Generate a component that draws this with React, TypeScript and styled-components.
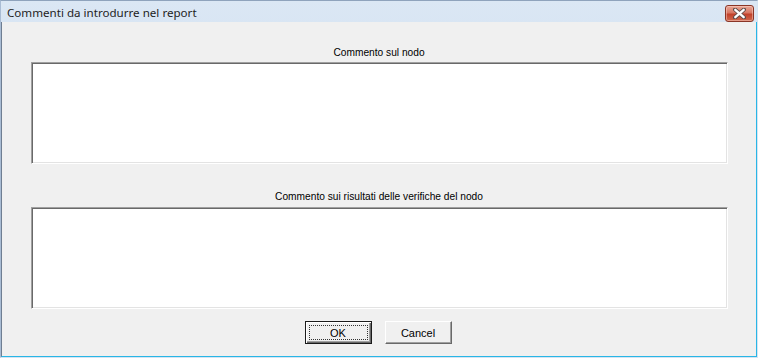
import React from 'react';
import styled, { createGlobalStyle } from 'styled-components';

const GlobalStyle = createGlobalStyle`
  html, body {
    margin: 0;
    padding: 0;
    background: #f0f0f0;
  }
  * {
    box-sizing: border-box;
  }
`;

const Frame = styled.div`
  width: 758px;
  height: 358px;
  display: flex;
  flex-direction: column;
  background: linear-gradient(#dbe7f4, #c6d9ee 60%, #b9d0e9);
  border-left: 1px solid #a9bcd4;
  border-right: 1px solid #d6e4f2;
  border-bottom: 1px solid #d6e4f2;
  border-top: 1px solid #8fa3bc;
`;

const TitleBar = styled.div`
  height: 21px;
  display: flex;
  align-items: center;
  justify-content: space-between;
  padding: 0 3px 0 6px;
`;

const Title = styled.span`
  font-family: "Noto Sans", "Open Sans", sans-serif;
  font-size: 11.6px;
  color: #1e1e1e;
  padding-top: 2px;
`;

const CloseButton = styled.div`
  width: 29px;
  height: 17px;
  margin-top: 4px;
  display: flex;
  align-items: center;
  justify-content: center;
  border: 1px solid #8a3526;
  border-radius: 3px;
  background: linear-gradient(#e9a796, #d77763 45%, #c2412a 55%, #cf6a4f);
  box-shadow: inset 0 0 0 1px rgba(255, 220, 210, 0.45);
`;

const Client = styled.div`
  flex: 1;
  display: flex;
  flex-direction: column;
  align-items: center;
  background: #f0f0f0;
  border-left: 1px solid #6f7e92;
  border-right: 1px solid #29b6e6;
  border-bottom: 1px solid #29b6e6;
  padding-top: 24px;
`;

const Label = styled.div<{ $gap: number }>`
  font-family: "Liberation Sans", Arial, sans-serif;
  font-size: 10.2px;
  line-height: 13px;
  color: #000;
  margin-bottom: ${(p) => p.$gap}px;
`;

const Memo = styled.div`
  width: 697px;
  height: 102px;
  background: #fff;
  border-style: solid;
  border-width: 1px;
  border-color: #a0a0a0 #fff #fff #a0a0a0;
  box-shadow: inset 1px 1px 0 #696969, inset -1px -1px 0 #e3e3e3;
`;

const Spacer = styled.div<{ $h: number }>`
  height: ${(p) => p.$h}px;
`;

const ButtonRow = styled.div`
  display: flex;
  gap: 13px;
  margin-top: 12px;
  margin-left: -2px;
`;

const Button = styled.div<{ $default?: boolean }>`
  width: 67px;
  height: 23px;
  display: flex;
  align-items: center;
  justify-content: center;
  font-family: "Liberation Sans", Arial, sans-serif;
  font-size: 11px;
  color: #000;
  background: #f0f0f0;
  position: relative;
  border: 1px solid ${(p) => (p.$default ? '#1a1a1a' : '#fff')};
  border-right-color: ${(p) => (p.$default ? '#1a1a1a' : '#696969')};
  border-bottom-color: ${(p) => (p.$default ? '#1a1a1a' : '#696969')};
  box-shadow: ${(p) =>
    p.$default
      ? 'inset 1px 1px 0 #fff, inset -1px -1px 0 #696969, inset -2px -2px 0 #a0a0a0'
      : 'inset -1px -1px 0 #a0a0a0'};
`;

const Focus = styled.span`
  position: absolute;
  inset: 3px;
  border: 1px dotted #333;
`;

export default function App() {
  return (
    <>
      <GlobalStyle />
      <Frame>
        <TitleBar>
          <Title>Commenti da introdurre nel report</Title>
          <CloseButton>
            <svg width="13" height="11" viewBox="0 0 13 11">
              <path d="M2 1.5 L11 9.5 M11 1.5 L2 9.5" stroke="#5a4a48" strokeWidth="4" strokeLinecap="round" />
              <path d="M2.3 1.8 L10.7 9.2 M10.7 1.8 L2.3 9.2" stroke="#fff" strokeWidth="2.4" strokeLinecap="round" />
            </svg>
          </CloseButton>
        </TitleBar>
        <Client>
          <Label $gap={3}>Commento sul nodo</Label>
          <Memo />
          <Spacer $h={26} />
          <Label $gap={4}>Commento sui risultati delle verifiche del nodo</Label>
          <Memo />
          <ButtonRow>
            <Button $default>
              OK
              <Focus />
            </Button>
            <Button>Cancel</Button>
          </ButtonRow>
        </Client>
      </Frame>
    </>
  );
}
